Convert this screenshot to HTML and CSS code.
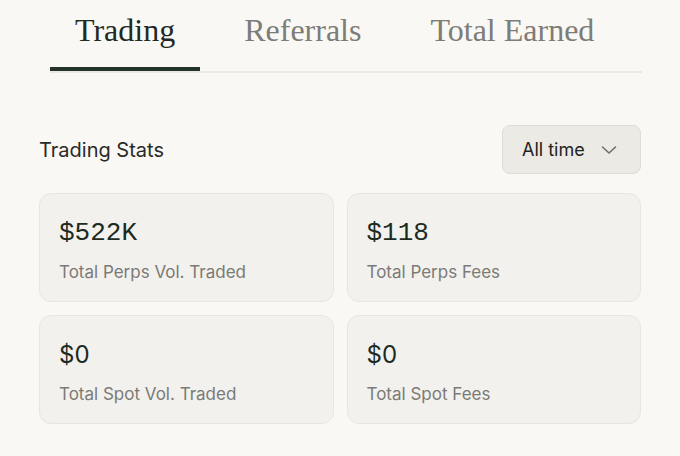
FILE: index.html
```html
<!DOCTYPE html>
<html>
<head>
<meta charset="utf-8">
<link rel="stylesheet" href="styles.css">
</head>
<body>
<div class="page">
  <nav class="tabs">
    <div class="tab active">Trading</div>
    <div class="tab">Referrals</div>
    <div class="tab">Total Earned</div>
  </nav>
  <div class="head">
    <div class="title">Trading Stats</div>
    <button class="select">
      <span>All time</span>
      <svg width="16" height="10" viewBox="0 0 16 10"><path d="M1.5 2 L8 8 L14.5 2" fill="none" stroke="#6e6e69" stroke-width="1.6" stroke-linecap="round" stroke-linejoin="round"/></svg>
    </button>
  </div>
  <div class="grid">
    <div class="card"><div class="value mono">$522K</div><div class="label">Total Perps Vol. Traded</div></div>
    <div class="card"><div class="value mono">$118</div><div class="label">Total Perps Fees</div></div>
    <div class="card"><div class="value">$0</div><div class="label">Total Spot Vol. Traded</div></div>
    <div class="card"><div class="value">$0</div><div class="label">Total Spot Fees</div></div>
  </div>
</div>
</body>
</html>
```
FILE: styles.css
```css
html, body {
  margin: 0;
  padding: 0;
  background: #f9f8f4;
}
body {
  font-family: Inter, "Noto Sans", sans-serif;
  width: 680px;
  height: 456px;
  overflow: hidden;
}
.page {
  padding: 0 39px;
}
.tabs {
  display: flex;
  gap: 19px;
  margin: 0 -1px 0 11px;
  border-bottom: 2px solid #ebe9e4;
}
.tab {
  font-family: "Liberation Serif", serif;
  font-size: 32px;
  color: #7d7c78;
  padding: 11px 25px 0;
  line-height: 38px;
  box-sizing: border-box;
  height: 71px;
  border-bottom: 4px solid transparent;
}
.tab.active {
  color: #1f2a23;
  border-bottom-color: #24332a;
}
.head {
  display: flex;
  justify-content: space-between;
  align-items: center;
  margin-top: 52px;
}
.title {
  font-size: 20px;
  color: #2a2a28;
}
.select {
  display: flex;
  align-items: center;
  gap: 16px;
  width: 139px;
  height: 49px;
  padding: 0 0 0 19px;
  background: #ebeae4;
  border: 1px solid #dedcd5;
  border-radius: 8px;
  font-family: Inter, sans-serif;
  font-size: 18px;
  color: #232321;
}
.grid {
  display: grid;
  grid-template-columns: 1fr 1fr;
  gap: 13px 13px;
  margin-top: 19px;
}
.card {
  background: #f2f1ed;
  border: 1px solid #e8e6e1;
  border-radius: 12px;
  height: 109px;
  box-sizing: border-box;
  padding: 23px 19px 0;
}
.value {
  font-size: 24px;
  color: #1c2a22;
  line-height: 32px;
}
.value.mono {
  font-family: "Liberation Mono", monospace;
  font-size: 26px;
}
.label {
  margin-top: 11px;
  font-size: 17px;
  color: #7b7a76;
  line-height: 24px;
}
```
